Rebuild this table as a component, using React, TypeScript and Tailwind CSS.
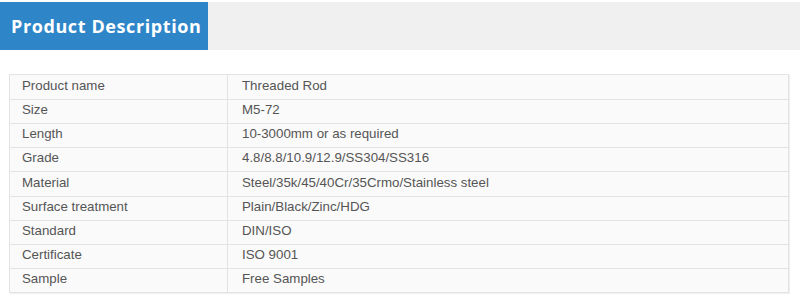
import React from "react";

const rows: [string, string][] = [
  ["Product name", "Threaded Rod"],
  ["Size", "M5-72"],
  ["Length", "10-3000mm or as required"],
  ["Grade", "4.8/8.8/10.9/12.9/SS304/SS316"],
  ["Material", "Steel/35k/45/40Cr/35Crmo/Stainless steel"],
  ["Surface treatment", "Plain/Black/Zinc/HDG"],
  ["Standard", "DIN/ISO"],
  ["Certificate", "ISO 9001"],
  ["Sample", "Free Samples"],
];

export default function App() {
  return (
    <div className="w-[800px] h-[300px] bg-white overflow-hidden">
      <div className="mt-[2px] h-[48px] bg-[#f0f0f0] flex">
        <div
          className="w-[208px] h-full bg-[#2e86c9] flex items-center pl-[11px] text-white text-[18px] font-bold tracking-[0.6px] whitespace-nowrap"
          style={{ fontFamily: '"Open Sans", sans-serif' }}
        >
          Product Description
        </div>
      </div>
      <div className="ml-[9px] mt-[24px] w-[780px] border border-[#e3e3e3] bg-[#fafafa] shadow-[1px_1px_1px_rgba(0,0,0,0.06)]">
        {rows.map(([k, v], i) => (
          <div
            key={k}
            className={`flex h-[24.11px] ${i > 0 ? "border-t border-[#e3e3e3]" : ""}`}
            style={{ fontFamily: '"Liberation Sans", Arial, sans-serif' }}
          >
            <div className="w-[218px] border-r border-[#e3e3e3] pl-[12px] pb-[3px] flex items-center text-[13.3px] text-[#555]">
              {k}
            </div>
            <div className="flex-1 pl-[14px] pb-[3px] flex items-center text-[13.3px] text-[#555]">
              {v}
            </div>
          </div>
        ))}
      </div>
    </div>
  );
}
